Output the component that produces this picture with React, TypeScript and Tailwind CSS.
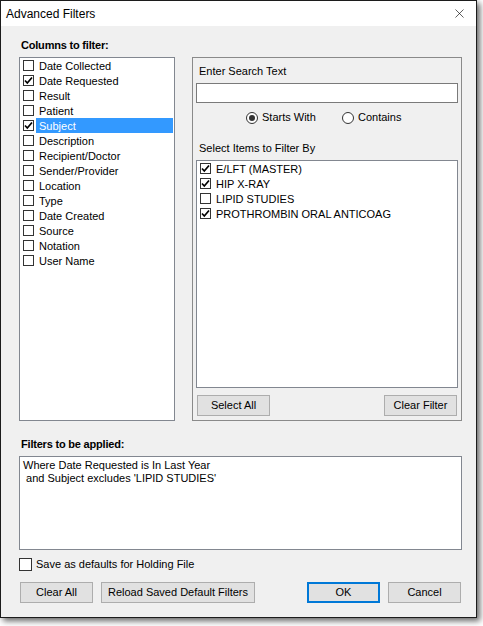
import { X } from "lucide-react";

const COLUMNS: { label: string; checked: boolean; selected?: boolean }[] = [
  { label: "Date Collected", checked: false },
  { label: "Date Requested", checked: true },
  { label: "Result", checked: false },
  { label: "Patient", checked: false },
  { label: "Subject", checked: true, selected: true },
  { label: "Description", checked: false },
  { label: "Recipient/Doctor", checked: false },
  { label: "Sender/Provider", checked: false },
  { label: "Location", checked: false },
  { label: "Type", checked: false },
  { label: "Date Created", checked: false },
  { label: "Source", checked: false },
  { label: "Notation", checked: false },
  { label: "User Name", checked: false },
];

const ITEMS = [
  { label: "E/LFT (MASTER)", checked: true },
  { label: "HIP X-RAY", checked: true },
  { label: "LIPID STUDIES", checked: false },
  { label: "PROTHROMBIN ORAL ANTICOAG", checked: true },
];

function CheckBox({ checked, big }: { checked: boolean; big?: boolean }) {
  return (
    <span
      className={`flex items-center justify-center shrink-0 border border-[#333] bg-white ${
        big ? "w-[13px] h-[13px]" : "w-[11px] h-[11px]"
      }`}
    >
      {checked && (
        <svg width="9" height="9" viewBox="0 0 9 9">
          <path d="M1 4.5 L3.3 7 L8 1.5" fill="none" stroke="#000" strokeWidth="1.7" />
        </svg>
      )}
    </span>
  );
}

function Radio({ checked }: { checked: boolean }) {
  return (
    <span className="flex items-center justify-center shrink-0 w-[12px] h-[12px] rounded-full border border-[#333] bg-white">
      {checked && <span className="w-[6px] h-[6px] rounded-full bg-[#333]" />}
    </span>
  );
}

function Button({ children, width, primary }: { children: React.ReactNode; width: string; primary?: boolean }) {
  return (
    <button
      className={`${width} h-[21px] shrink-0 bg-[#e1e1e1] text-black text-[11px] leading-none ${
        primary ? "border-2 border-[#0078d7]" : "border border-[#adadad]"
      }`}
    >
      {children}
    </button>
  );
}

export default function App() {
  return (
    <div className="w-[483px] h-[626px] bg-white font-['Liberation_Sans',Arial,sans-serif] text-[11px] text-black">
      <div className="flex flex-col w-[477px] h-[618px] border border-[#1c1c1c] bg-[#f0f0f0] shadow-[3px_3px_6px_rgba(0,0,0,0.6)]">
        {/* title bar */}
        <div className="flex items-center justify-between h-[25px] shrink-0 bg-white pl-[5px] pr-[9px]">
          <span className="text-[12px] pt-px">Advanced Filters</span>
          <X size={15} strokeWidth={1} className="text-black" />
        </div>

        <div className="flex flex-col flex-1 pl-[18px] pr-[14px] pt-[12px] pb-[14px]">
          <div className="h-[13px] leading-[14px] pl-[2px] font-bold tracking-[-0.2px]">Columns to filter:</div>

          <div className="flex gap-[17px] mt-[6px] h-[364px]">
            {/* column list */}
            <div className="w-[156px] border border-[#828790] bg-white">
              {COLUMNS.map((c) => (
                <div key={c.label} className="flex items-center h-[15px] pl-[3px] pr-[1px]">
                  <CheckBox checked={c.checked} />
                  <span
                    className={`flex-1 ml-[2px] pl-[3px] h-[15px] leading-[16px] whitespace-nowrap ${
                      c.selected ? "bg-[#3399ff] text-white" : ""
                    }`}
                  >
                    {c.label}
                  </span>
                </div>
              ))}
            </div>

            {/* search group */}
            <div className="flex flex-col flex-1 border border-[#8a8a8a] px-[3px] pt-[6px] pb-[4px]">
              <div className="h-[13px] leading-[14px] pl-[3px]">Enter Search Text</div>
              <div className="mt-[6px] h-[20px] border border-[#7a7a7a] bg-white" />
              <div className="flex items-center h-[13px] mt-[8px] pl-[50px]">
                <div className="flex items-center gap-[4px] w-[96px]">
                  <Radio checked />
                  <span>Starts With</span>
                </div>
                <div className="flex items-center gap-[4px]">
                  <Radio checked={false} />
                  <span>Contains</span>
                </div>
              </div>
              <div className="h-[13px] leading-[14px] pl-[3px] mt-[17px]">Select Items to Filter By</div>
              <div className="flex-1 mt-[6px] border border-[#828790] bg-white">
                {ITEMS.map((i) => (
                  <div key={i.label} className="flex items-center gap-[5px] h-[15px] pl-[3px]">
                    <CheckBox checked={i.checked} />
                    <span className="whitespace-nowrap leading-[16px]">{i.label}</span>
                  </div>
                ))}
              </div>
              <div className="flex justify-between mt-[7px] px-px">
                <Button width="w-[73px]">Select All</Button>
                <Button width="w-[73px]">Clear Filter</Button>
              </div>
            </div>
          </div>

          <div className="h-[13px] leading-[14px] pl-[2px] mt-[16px] font-bold tracking-[-0.2px]">Filters to be applied:</div>
          <div className="mt-[6px] h-[94px] border border-[#828790] bg-white px-[3px] pt-[2px] leading-[13px] whitespace-pre">
            <div>Where Date Requested is In Last Year</div>
            <div> and Subject excludes 'LIPID STUDIES'</div>
          </div>

          <div className="flex items-center gap-[4px] mt-[8px] h-[13px]">
            <CheckBox checked={false} big />
            <span>Save as defaults for Holding File</span>
          </div>

          <div className="flex items-center mt-[11px] pl-px pr-px">
            <Button width="w-[73px]">Clear All</Button>
            <div className="ml-[8px]">
              <Button width="w-[154px]">Reload Saved Default Filters</Button>
            </div>
            <div className="flex-1" />
            <Button width="w-[73px]" primary>OK</Button>
            <div className="ml-[8px]">
              <Button width="w-[73px]">Cancel</Button>
            </div>
          </div>
        </div>
      </div>
    </div>
  );
}
